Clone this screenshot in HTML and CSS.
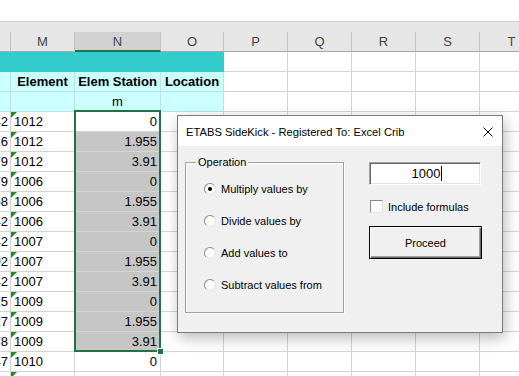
FILE: index.html
```html
<!DOCTYPE html>
<html lang="en">
<head>
    <meta charset="UTF-8">
    <title>ETABS SideKick</title>
    <link rel="stylesheet" href="styles.css">
</head>
<body>
<div class="app">
    <div class="formula-gap"></div>
    <div class="head-strip"></div>

    <div class="sheet">
        <!-- column letters -->
        <div class="head"></div>
        <div class="head">M</div>
        <div class="head active">N</div>
        <div class="head">O</div>
        <div class="head">P</div>
        <div class="head">Q</div>
        <div class="head">R</div>
        <div class="head">S</div>
        <div class="head">T</div>

        <!-- table title rows -->
        <div class="cell teal"></div>
        <div class="cell"></div><div class="cell"></div><div class="cell"></div><div class="cell"></div><div class="cell"></div>

        <div class="cell cyan"></div>
        <div class="cell cyan bold">Element</div>
        <div class="cell cyan bold">Elem Station</div>
        <div class="cell cyan bold">Location</div>
        <div class="cell"></div><div class="cell"></div><div class="cell"></div><div class="cell"></div><div class="cell"></div>

        <div class="cell cyan"></div>
        <div class="cell cyan"></div>
        <div class="cell cyan center">m</div>
        <div class="cell cyan"></div>
        <div class="cell"></div><div class="cell"></div><div class="cell"></div><div class="cell"></div><div class="cell"></div>

        <!-- data -->
        <div class="cell lnum"><span>5.342</span></div>
        <div class="cell txt">1012</div>
        <div class="cell num">0</div>
        <div class="cell"></div>
        <div class="cell"></div><div class="cell"></div><div class="cell"></div><div class="cell"></div><div class="cell"></div>

        <div class="cell lnum"><span>5.316</span></div>
        <div class="cell txt">1012</div>
        <div class="cell num sel">1.955</div>
        <div class="cell"></div>
        <div class="cell"></div><div class="cell"></div><div class="cell"></div><div class="cell"></div><div class="cell"></div>

        <div class="cell lnum"><span>5.279</span></div>
        <div class="cell txt">1012</div>
        <div class="cell num sel">3.91</div>
        <div class="cell"></div>
        <div class="cell"></div><div class="cell"></div><div class="cell"></div><div class="cell"></div><div class="cell"></div>

        <div class="cell lnum"><span>5.179</span></div>
        <div class="cell txt">1006</div>
        <div class="cell num sel">0</div>
        <div class="cell"></div>
        <div class="cell"></div><div class="cell"></div><div class="cell"></div><div class="cell"></div><div class="cell"></div>

        <div class="cell lnum"><span>5.158</span></div>
        <div class="cell txt">1006</div>
        <div class="cell num sel">1.955</div>
        <div class="cell"></div>
        <div class="cell"></div><div class="cell"></div><div class="cell"></div><div class="cell"></div><div class="cell"></div>

        <div class="cell lnum"><span>5.342</span></div>
        <div class="cell txt">1006</div>
        <div class="cell num sel">3.91</div>
        <div class="cell"></div>
        <div class="cell"></div><div class="cell"></div><div class="cell"></div><div class="cell"></div><div class="cell"></div>

        <div class="cell lnum"><span>5.342</span></div>
        <div class="cell txt">1007</div>
        <div class="cell num sel">0</div>
        <div class="cell"></div>
        <div class="cell"></div><div class="cell"></div><div class="cell"></div><div class="cell"></div><div class="cell"></div>

        <div class="cell lnum"><span>5.302</span></div>
        <div class="cell txt">1007</div>
        <div class="cell num sel">1.955</div>
        <div class="cell"></div>
        <div class="cell"></div><div class="cell"></div><div class="cell"></div><div class="cell"></div><div class="cell"></div>

        <div class="cell lnum"><span>5.342</span></div>
        <div class="cell txt">1007</div>
        <div class="cell num sel">3.91</div>
        <div class="cell"></div>
        <div class="cell"></div><div class="cell"></div><div class="cell"></div><div class="cell"></div><div class="cell"></div>

        <div class="cell lnum"><span>5.415</span></div>
        <div class="cell txt">1009</div>
        <div class="cell num sel">0</div>
        <div class="cell"></div>
        <div class="cell"></div><div class="cell"></div><div class="cell"></div><div class="cell"></div><div class="cell"></div>

        <div class="cell lnum"><span>5.327</span></div>
        <div class="cell txt">1009</div>
        <div class="cell num sel">1.955</div>
        <div class="cell"></div>
        <div class="cell"></div><div class="cell"></div><div class="cell"></div><div class="cell"></div><div class="cell"></div>

        <div class="cell lnum"><span>5.378</span></div>
        <div class="cell txt">1009</div>
        <div class="cell num sel">3.91</div>
        <div class="cell"></div>
        <div class="cell"></div><div class="cell"></div><div class="cell"></div><div class="cell"></div><div class="cell"></div>

        <div class="cell lnum"><span>5.347</span></div>
        <div class="cell txt">1010</div>
        <div class="cell num">0</div>
        <div class="cell"></div>
        <div class="cell"></div><div class="cell"></div><div class="cell"></div><div class="cell"></div><div class="cell"></div>

        <div class="cell"></div>
        <div class="cell txt"></div>
        <div class="cell"></div>
        <div class="cell"></div>
        <div class="cell"></div><div class="cell"></div><div class="cell"></div><div class="cell"></div><div class="cell"></div>

        <div class="selection"><span class="fill-handle"></span></div>
    </div>

    <div class="dialog">
        <div class="titlebar">
            <span>ETABS SideKick - Registered To: Excel Crib</span>
            <svg class="close" width="10" height="10" viewBox="0 0 10 10">
                <path d="M0.5 0.5 L9.5 9.5 M9.5 0.5 L0.5 9.5" stroke="#000" stroke-width="1" fill="none"/>
            </svg>
        </div>
        <div class="dlg-body">
            <div class="group">
                <div class="group-title">Operation</div>
                <div class="options">
                    <div class="option"><span class="radio on"></span>Multiply values by</div>
                    <div class="option"><span class="radio"></span>Divide values by</div>
                    <div class="option"><span class="radio"></span>Add values to</div>
                    <div class="option"><span class="radio"></span>Subtract values from</div>
                </div>
            </div>
            <div class="side">
                <div class="textbox">1000<span class="caret"></span></div>
                <div class="check-row"><span class="checkbox"></span>Include formulas</div>
                <button class="btn">Proceed</button>
            </div>
        </div>
    </div>
</div>
</body>
</html>
```

FILE: styles.css
```css
* {
    box-sizing: border-box;
}

body {
    margin: 0;
    width: 519px;
    height: 376px;
    overflow: hidden;
    background: #fff;
    font-family: "Liberation Sans", Arial, sans-serif;
    color: #000;
}

.app {
    position: relative;
    height: 376px;
    overflow: hidden;
}

.formula-gap {
    height: 22px;
    background: #fff;
    border-bottom: 1px solid #cfcfcf;
}

.head-strip {
    height: 10px;
    background: #e6e6e6;
}

.sheet {
    position: relative;
    display: grid;
    grid-template-columns: 11px 64px 86px 63px repeat(5, 64px);
    grid-auto-rows: 20px;
    width: 544px;
}

.head {
    background: #e6e6e6;
    border-right: 1px solid #c4c4c4;
    border-bottom: 1px solid #a6a6a6;
    text-align: center;
    color: #444;
    font-size: 13px;
    line-height: 19px;
}

.head.active {
    background: #d2d2d2;
    border-bottom: 2px solid #217346;
}

.cell {
    position: relative;
    border-right: 1px solid #d4d4d4;
    border-bottom: 1px solid #d4d4d4;
    font-size: 13px;
    line-height: 20px;
    padding: 0 3px;
    white-space: nowrap;
}

.teal {
    grid-column: span 4;
    background: #33cccc;
    border-color: #33cccc;
}

.cyan {
    background: #ccffff;
    border-color: #b9e3e3;
}

.bold {
    font-weight: bold;
    text-align: center;
    padding: 0;
}

.center {
    text-align: center;
}

.num {
    text-align: right;
    padding-right: 3px;
}

.lnum {
    display: flex;
    justify-content: flex-end;
    padding-right: 2px;
}

.txt::before {
    content: "";
    position: absolute;
    top: 0;
    left: 0;
    border-top: 6px solid #1f8a1f;
    border-right: 6px solid transparent;
}

.sel {
    background: #c6c6c6;
}

.selection {
    position: absolute;
    left: 74px;
    top: 78px;
    width: 87px;
    height: 242px;
    border: 2px solid #217346;
}

.fill-handle {
    position: absolute;
    right: -5px;
    bottom: -5px;
    width: 7px;
    height: 7px;
    background: #217346;
    border: 1px solid #fff;
}

/* dialog window */
.dialog {
    position: absolute;
    left: 177px;
    top: 115px;
    width: 326px;
    height: 218px;
    border: 1px solid #7a7a7a;
    background: #f0f0f0;
    box-shadow: 2px 5px 14px rgba(0, 0, 0, 0.28);
    display: flex;
    flex-direction: column;
    font-size: 11px;
}

.titlebar {
    height: 30px;
    background: #fff;
    display: flex;
    align-items: center;
    justify-content: space-between;
    padding: 1px 9px 0 8px;
    font-size: 11.2px;
}

.dlg-body {
    flex: 1;
    display: flex;
    align-items: flex-start;
    gap: 25px;
    padding: 16px 0 0 7px;
}

.group {
    width: 159px;
    height: 151px;
    border: 1px solid #a0a0a0;
    box-shadow: inset 1px 1px 0 #fff, 1px 1px 0 #fff;
}

.group-title {
    width: max-content;
    margin: -7px 0 0 10px;
    padding: 0 2px;
    background: #f0f0f0;
    line-height: 13px;
}

.options {
    margin-top: 12px;
    padding-left: 18px;
    display: flex;
    flex-direction: column;
    gap: 16px;
}

.option {
    display: flex;
    align-items: center;
    gap: 5px;
    height: 16px;
}

.radio {
    flex: none;
    width: 12px;
    height: 12px;
    border-radius: 50%;
    background: #fff;
    border: 1px solid;
    border-color: #8a8a8a #e3e3e3 #e3e3e3 #8a8a8a;
    display: flex;
    align-items: center;
    justify-content: center;
}

.radio.on::after {
    content: "";
    width: 4px;
    height: 4px;
    border-radius: 50%;
    background: #000;
}

.side {
    width: 113px;
    display: flex;
    flex-direction: column;
}

.textbox {
    width: 112px;
    height: 23px;
    background: #fff;
    border: 1px solid;
    border-color: #a0a0a0 #fff #fff #a0a0a0;
    box-shadow: inset 1px 1px 0 #696969, inset -1px -1px 0 #e3e3e3;
    text-align: center;
    font-size: 13px;
    line-height: 21px;
    padding-left: 4px;
}

.caret {
    display: inline-block;
    width: 1px;
    height: 15px;
    margin-left: 1px;
    background: #000;
    vertical-align: -3px;
}

.check-row {
    display: flex;
    align-items: center;
    gap: 5px;
    height: 13px;
    margin-top: 15px;
    padding-left: 1px;
}

.checkbox {
    flex: none;
    width: 13px;
    height: 13px;
    background: #fff;
    border: 1px solid;
    border-color: #8a8a8a #e3e3e3 #e3e3e3 #8a8a8a;
}

.btn {
    margin-top: 13px;
    width: 113px;
    height: 33px;
    border: 1px solid #000;
    background: #f0f0f0;
    box-shadow: inset 1px 1px 0 #fff, inset -1px -1px 0 #696969, inset -2px -2px 0 #a0a0a0;
    font-family: "Liberation Sans", Arial, sans-serif;
    font-size: 11px;
    color: #000;
    padding: 0;
}
```
